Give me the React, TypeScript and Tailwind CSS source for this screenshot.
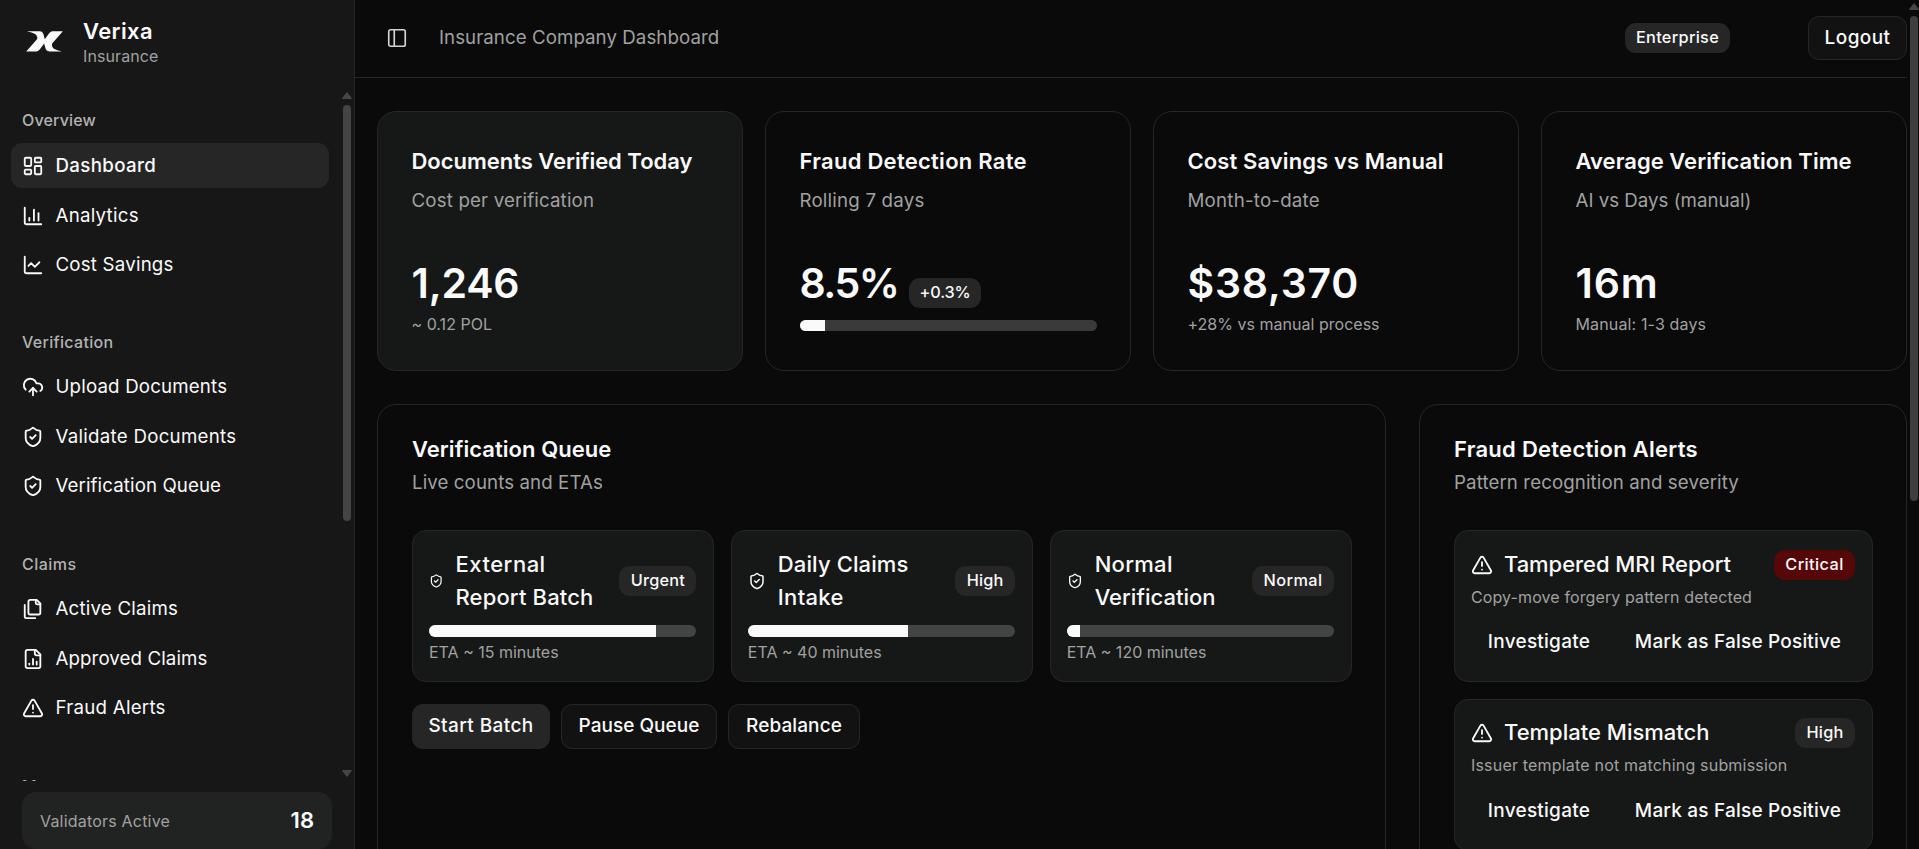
import React from 'react'
import {
  ChartColumn,
  ChartLine,
  CloudUpload,
  LayoutDashboard,
  PanelLeft,
  ShieldCheck,
  TriangleAlert,
} from 'lucide-react'

type IconType = React.ComponentType<{ className?: string }>
type NavItem = { label: string; icon: IconType; text: string; active?: boolean }

function StrokeIcon({ className, paths }: { className?: string; paths: string[] }) {
  return (
    <svg viewBox="0 0 24 24" className={className} fill="none" stroke="currentColor" strokeWidth="2" strokeLinecap="round" strokeLinejoin="round">
      {paths.map((d) => (
        <path key={d} d={d} />
      ))}
    </svg>
  )
}

function FilesIcon({ className }: { className?: string }) {
  return (
    <StrokeIcon
      className={className}
      paths={['M20 7h-3a2 2 0 0 1-2-2V2', 'M9 18a2 2 0 0 1-2-2V4a2 2 0 0 1 2-2h7l4 4v10a2 2 0 0 1-2 2Z', 'M3 7.6v12.8A1.6 1.6 0 0 0 4.6 22h9.8']}
    />
  )
}

function FileChartIcon({ className }: { className?: string }) {
  return (
    <StrokeIcon
      className={className}
      paths={['M15 2H6a2 2 0 0 0-2 2v16a2 2 0 0 0 2 2h12a2 2 0 0 0 2-2V7Z', 'M14 2v4a2 2 0 0 0 2 2h4', 'M8 18v-1', 'M12 18v-6', 'M16 18v-3']}
    />
  )
}

const groups: { label: string; text: string; items: NavItem[] }[] = [
  {
    label: 'Overview',
    text: 'tracking-[0.16px]',
    items: [
      { label: 'Dashboard', icon: LayoutDashboard, text: 'font-medium tracking-[0.35px]', active: true },
      { label: 'Analytics', icon: ChartColumn, text: 'tracking-[0.25px]' },
      { label: 'Cost Savings', icon: ChartLine, text: 'tracking-[0.2px]' },
    ],
  },
  {
    label: 'Verification',
    text: 'tracking-[0.31px]',
    items: [
      { label: 'Upload Documents', icon: CloudUpload, text: 'tracking-[0.17px]' },
      { label: 'Validate Documents', icon: ShieldCheck, text: 'tracking-[0.27px]' },
      { label: 'Verification Queue', icon: ShieldCheck, text: 'tracking-[0.1px]' },
    ],
  },
  {
    label: 'Claims',
    text: 'tracking-[0.48px]',
    items: [
      { label: 'Active Claims', icon: FilesIcon, text: 'tracking-[0.2px]' },
      { label: 'Approved Claims', icon: FileChartIcon, text: 'tracking-[0.1px]' },
      { label: 'Fraud Alerts', icon: TriangleAlert, text: 'tracking-[0.25px]' },
    ],
  },
  { label: 'Management', text: '', items: [] },
]

function Logo() {
  return (
    <svg viewBox="0 0 37 21" className="h-[21px] w-[37px] shrink-0 fill-[#fafafa]">
      <path d="M1 0.3H13.6C15.8 0.3 16.8 1.2 17.5 3.6L18.8 8.2L22.8 2.8C24.4 0.8 25.4 0.3 27.8 0.3H36.9L26.6 12C25.8 13 25.8 13.8 26.2 15.2C26.9 17.4 28.5 18.6 35.8 20.4H23.4C21 20.4 20.1 19.5 19.4 17.1L18.1 12.6L14.1 17.9C12.5 19.9 11.4 20.4 9 20.4H0.2L10.8 8.4C11.5 7.5 11.5 6.6 11 5.4C10.2 3.4 8.6 2.2 1 0.3Z" />
    </svg>
  )
}

function Arrow({ down }: { down?: boolean }) {
  return (
    <svg viewBox="0 0 10 7" className={down ? 'h-[7px] w-[10px] rotate-180' : 'h-[7px] w-[10px]'}>
      <path d="M5 0.8L9.2 6.3H0.8Z" fill="#464646" stroke="#464646" strokeWidth="1.2" strokeLinejoin="round" />
    </svg>
  )
}

function Sidebar() {
  return (
    <aside className="flex h-full w-[355px] shrink-0 flex-col border-r border-[#272727] bg-[#171717]">
      <div className="flex h-[87px] shrink-0 items-start pt-[15px] pl-[26px]">
        <div className="mt-4">
          <Logo />
        </div>
        <div className="ml-[20px]">
          <div className="h-[33px] text-[22px] leading-[33px] font-semibold tracking-[0.4px] text-[#fafafa]">Verixa</div>
          <div className="-mt-[3px] text-[16px] leading-[22px] tracking-[0.1px] text-[#a1a1a1]">Insurance</div>
        </div>
      </div>
      <div className="flex h-[694px] shrink-0 overflow-hidden">
        <div className="flex w-[340px] flex-col gap-[11px]">
          {groups.map((g) => (
            <section key={g.label} className="shrink-0 px-[11px] pt-[11px] pb-[11px]">
              <h2 className={`h-[44px] pl-[11px] text-[16px] leading-[44px] font-medium text-[#b2b2b2] ${g.text}`}>{g.label}</h2>
              <ul className="flex h-[145px] flex-col gap-[5.5px] pt-px">
                {g.items.map(({ label, icon: Icon, text, active }) => (
                  <li
                    key={label}
                    className={
                      active
                        ? 'flex h-[45px] w-[318px] shrink-0 items-center gap-[11.5px] rounded-[11px] bg-[#262626] px-[11px]'
                        : 'flex h-[44px] w-[318px] shrink-0 items-center gap-[11.5px] px-[11px]'
                    }
                  >
                    <Icon className="size-[22px] text-[#fafafa]" />
                    <span className={`pt-px text-[18.7px] text-[#fafafa] ${text}`}>{label}</span>
                  </li>
                ))}
              </ul>
            </section>
          ))}
        </div>
        <div className="flex w-[14px] flex-col items-center pt-[5px] pb-[4px]">
          <Arrow />
          <div className="mt-[6px] h-[416px] w-[8px] rounded-full bg-[#444444]" />
          <div className="grow" />
          <Arrow down />
        </div>
      </div>
      <div className="mx-[22px] mt-[11px] flex h-[57px] w-[310px] shrink-0 items-center justify-between rounded-[14px] bg-[#212322] pr-[18px] pl-[18px]">
        <span className="text-[16px] tracking-[0.2px] text-[#a1a1a1]">Validators Active</span>
        <span className="text-[22px] font-semibold text-[#fafafa]">18</span>
      </div>
    </aside>
  )
}

function Badge({ children, className = 'bg-[#262626]' }: { children: React.ReactNode; className?: string }) {
  return (
    <span className={`flex h-[30px] shrink-0 items-center justify-center rounded-[11px] pb-px text-[16.3px] font-medium text-[#fafafa] ${className}`}>
      {children}
    </span>
  )
}

function Bar({ value, className = '' }: { value: number; className?: string }) {
  return (
    <div className={`w-full overflow-hidden rounded-full ${className}`}>
      <div className="h-full bg-[#fafafa]" style={{ width: `${value}%` }} />
    </div>
  )
}

function StatCard(p: {
  title: string
  titleClass: string
  desc: string
  descClass: string
  value: string
  valueClass: string
  tinted?: boolean
  badge?: string
  note?: string
  noteClass?: string
  bar?: number
}) {
  return (
    <article className={`h-[260px] rounded-[19px] border border-[#262626] pt-[33px] pr-[33px] pl-[33.5px] ${p.tinted ? 'bg-[#161817]' : 'bg-[#0a0a0a]'}`}>
      <h3 className={`text-[22px] leading-[33px] font-semibold whitespace-nowrap text-[#fafafa] ${p.titleClass}`}>{p.title}</h3>
      <p className={`mt-[9px] text-[18.7px] leading-[28px] text-[#a1a1a1] ${p.descClass}`}>{p.desc}</p>
      <div className="mt-[43px] flex h-[50px] items-end gap-[10.5px]">
        <span className={`text-[41px] leading-[50px] font-semibold text-[#fafafa] ${p.valueClass}`}>{p.value}</span>
        {p.badge && <Badge className="w-[72px] bg-[#262626] tracking-[-0.2px]">{p.badge}</Badge>}
      </div>
      {p.bar !== undefined && <Bar value={p.bar} className="mt-[12px] h-[11px] bg-[#3a3a3a]" />}
      {p.note && <p className={`mt-[5px] text-[16px] leading-[22px] text-[#a1a1a1] ${p.noteClass}`}>{p.note}</p>}
    </article>
  )
}

function PanelHead({ title, titleClass, desc, descClass }: { title: string; titleClass: string; desc: string; descClass: string }) {
  return (
    <header className="h-[92px]">
      <h3 className={`text-[22px] leading-[23px] font-semibold text-[#fafafa] ${titleClass}`}>{title}</h3>
      <p className={`mt-[8px] text-[18.7px] leading-[28px] text-[#a1a1a1] ${descClass}`}>{desc}</p>
    </header>
  )
}

const queue = [
  { lines: ['External', 'Report Batch'], track: ['tracking-[0.5px]', 'tracking-[0.15px]'], icon: 'h-[22px] w-[14.5px]', badge: 'Urgent', badgeClass: 'w-[77px] bg-[#262626] tracking-[0.2px]', value: 85, eta: 'ETA ~ 15 minutes' },
  { lines: ['Daily Claims', 'Intake'], track: ['tracking-[0.12px]', 'tracking-[0.3px]'], icon: 'h-[22px] w-[18px]', badge: 'High', badgeClass: 'w-[60px] bg-[#262626] tracking-[0.2px]', value: 60, eta: 'ETA ~ 40 minutes' },
  { lines: ['Normal', 'Verification'], track: ['tracking-[0.3px]', 'tracking-[0.03px]'], icon: 'h-[22px] w-[16px]', badge: 'Normal', badgeClass: 'w-[82px] bg-[#262626] tracking-[0.4px]', value: 5, eta: 'ETA ~ 120 minutes' },
]

const alerts = [
  { title: 'Tampered MRI Report', titleClass: 'tracking-[-0.06px]', desc: 'Copy-move forgery pattern detected', descClass: 'tracking-[0.11px]', badge: 'Critical', badgeClass: 'w-[81px] bg-[#560808] tracking-[0.4px]', pad: 'pt-[17px]', actions: 'mt-[12px]' },
  { title: 'Template Mismatch', titleClass: '', desc: 'Issuer template not matching submission', descClass: 'tracking-[0.19px]', badge: 'High', badgeClass: 'w-[60px] bg-[#262626] tracking-[0.2px]', pad: 'pt-[16px]', actions: 'mt-[13px]' },
]

function QueuePanel() {
  return (
    <section className="h-[480px] w-[1009px] rounded-[19px] border border-[#262626] pt-[33px] pr-[33px] pl-[34px]">
      <PanelHead title="Verification Queue" titleClass="tracking-[0.05px]" desc="Live counts and ETAs" descClass="tracking-[0.09px]" />
      <div className="grid grid-cols-3 gap-[16.5px]">
        {queue.map((q) => (
          <article key={q.badge} className="h-[152px] rounded-[14px] border border-[#262626] bg-[#161817] pt-[17px] pr-[17px] pl-[16px]">
            <div className="flex items-center justify-between">
              <div className="flex items-center gap-[12px]">
                <ShieldCheck className={`shrink-0 text-[#fafafa] ${q.icon}`} />
                <div className="text-[22px] leading-[33px] font-medium whitespace-nowrap text-[#fafafa]">
                  {q.lines.map((l, i) => (
                    <div key={l} className={q.track[i]}>{l}</div>
                  ))}
                </div>
              </div>
              <Badge className={q.badgeClass}>{q.badge}</Badge>
            </div>
            <Bar value={q.value} className="mt-[11px] h-[12px] bg-[#434444]" />
            <p className="mt-[4px] text-[16px] leading-[22px] text-[#a1a1a1]">{q.eta}</p>
          </article>
        ))}
      </div>
      <div className="mt-[22px] flex gap-[11px] text-[19px] font-medium text-[#fafafa]">
        <button className="h-[45px] w-[138px] rounded-[11px] bg-[#262626] pb-px tracking-[0.4px]">Start Batch</button>
        <button className="h-[45px] w-[156px] rounded-[11px] border border-[#262626] bg-[#121212] pb-px tracking-[0.02px]">Pause Queue</button>
        <button className="h-[45px] w-[132px] rounded-[11px] border border-[#262626] bg-[#121212] pb-px tracking-[0.1px]">Rebalance</button>
      </div>
    </section>
  )
}

function AlertsPanel() {
  return (
    <section className="h-[480px] w-[488px] rounded-[19px] border border-[#262626] pt-[33px] pr-[33px] pl-[34px]">
      <PanelHead title="Fraud Detection Alerts" titleClass="tracking-[0.26px]" desc="Pattern recognition and severity" descClass="tracking-[0.1px]" />
      <div className="flex flex-col gap-[17px]">
        {alerts.map((a) => (
          <article key={a.title} className={`h-[152px] rounded-[14px] border border-[#262626] bg-[#161817] pr-[17px] pl-[16px] ${a.pad}`}>
            <div className="flex h-[33px] items-center">
              <TriangleAlert className="size-[22px] text-[#fafafa]" />
              <span className={`ml-[11px] grow text-[22px] font-medium text-[#fafafa] ${a.titleClass}`}>{a.title}</span>
              <Badge className={a.badgeClass}>{a.badge}</Badge>
            </div>
            <p className={`mt-[5px] text-[16px] leading-[22px] text-[#a1a1a1] ${a.descClass}`}>{a.desc}</p>
            <div className={`flex gap-[11px] text-[19px] font-medium whitespace-nowrap text-[#fafafa] ${a.actions}`}>
              <button className="h-[44px] w-[136px] shrink-0 tracking-[0.25px]">Investigate</button>
              <button className="h-[44px] w-[240px] shrink-0 tracking-[0.2px]">Mark as False Positive</button>
            </div>
          </article>
        ))}
      </div>
    </section>
  )
}

export default function App() {
  return (
    <div className="flex h-[849px] w-[1919px] overflow-hidden bg-[#0a0a0a] font-['Inter',sans-serif]">
      <Sidebar />
      <main className="flex w-[1552px] shrink-0 flex-col">
        <header className="flex h-[78px] shrink-0 items-center border-b border-[#272727] pb-px pl-[31px]">
          <PanelLeft className="size-[22px] text-[#d4d4d4]" strokeWidth={1.8} />
          <span className="ml-[31px] grow text-[18.7px] tracking-[0.06px] text-[#a1a1a1]">Insurance Company Dashboard</span>
          <Badge className="w-[105px] bg-[#262626] tracking-[0.3px]">Enterprise</Badge>
          <button className="ml-[78px] h-[44px] w-[99px] rounded-[11px] border border-[#262626] bg-[#121212] text-[19px] font-medium tracking-[0.4px] text-[#fafafa]">
            Logout
          </button>
        </header>
        <div className="grid shrink-0 grid-cols-4 gap-[22px] pt-[33px] pl-[22px]">
          <StatCard tinted title="Documents Verified Today" titleClass="tracking-[-0.02px]" desc="Cost per verification" descClass="tracking-[0.16px]" value="1,246" valueClass="tracking-[-0.2px]" note="~ 0.12 POL" noteClass="tracking-[0.03px]" />
          <StatCard title="Fraud Detection Rate" titleClass="tracking-[0.27px]" desc="Rolling 7 days" descClass="tracking-[0.2px]" value="8.5%" valueClass="tracking-[-1.5px]" badge="+0.3%" bar={8.5} />
          <StatCard title="Cost Savings vs Manual" titleClass="tracking-[0.1px]" desc="Month-to-date" descClass="tracking-[0.23px]" value="$38,370" valueClass="tracking-[0.75px]" note="+28% vs manual process" noteClass="tracking-[0.02px]" />
          <StatCard title="Average Verification Time" titleClass="tracking-[0.04px]" desc="AI vs Days (manual)" descClass="tracking-[0.01px]" value="16m" valueClass="tracking-[0.8px]" note="Manual: 1-3 days" noteClass="tracking-[0.14px]" />
        </div>
        <div className="flex shrink-0 gap-[33px] pt-[33px] pl-[22px]">
          <QueuePanel />
          <AlertsPanel />
        </div>
      </main>
      <div className="flex w-[12px] shrink-0 flex-col items-center pt-[3px] pl-[2px]">
        <Arrow />
        <div className="mt-[6px] h-[485px] w-[8px] shrink-0 rounded-full bg-[#3e3e3e]" />
      </div>
    </div>
  )
}
